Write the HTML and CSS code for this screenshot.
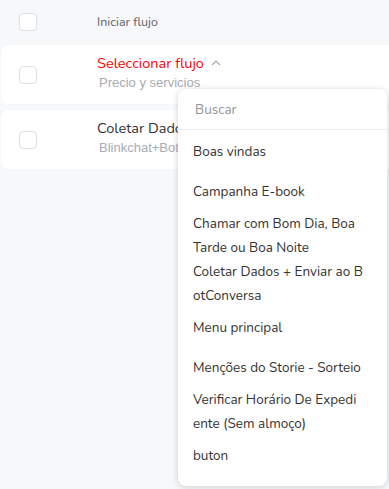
FILE: index.html
```html
<!DOCTYPE html>
<html>
<head>
<meta charset="utf-8">
<link rel="stylesheet" href="styles.css">
</head>
<body>
<div class="page">
  <div class="row top">
    <span class="checkbox"></span>
    <div class="info"><div class="title small">Iniciar flujo</div></div>
  </div>
  <div class="row card">
    <span class="checkbox"></span>
    <div class="info">
      <div class="title red">Seleccionar flujo <svg class="chev" width="10" height="6" viewBox="0 0 10 6"><path d="M1 5 L5 1.2 L9 5" fill="none" stroke="#a8abb2" stroke-width="1.3"/></svg></div>
      <div class="sub">Precio y servicios</div>
    </div>
  </div>
  <div class="row card">
    <span class="checkbox"></span>
    <div class="info clip">
      <div class="title">Coletar Dados + Enviar ao BotConversa</div>
      <div class="sub">Blinkchat+BotConversa</div>
    </div>
  </div>

  <div class="dropdown">
    <div class="search">Buscar</div>
    <ul class="list">
      <li class="item">Boas vindas</li>
      <li class="item gap-lg">Campanha E-book</li>
      <li class="item">Chamar com Bom Dia, Boa<br>Tarde ou Boa Noite</li>
      <li class="item tight">Coletar Dados + Enviar ao B<br>otConversa</li>
      <li class="item">Menu principal</li>
      <li class="item gap-lg">Menções do Storie - Sorteio</li>
      <li class="item">Verificar Horário De Expedi<br>ente (Sem almoço)</li>
      <li class="item">buton</li>
    </ul>
  </div>
</div>
</body>
</html>
```
FILE: styles.css
```css
html, body {
  margin: 0;
  padding: 0;
  background: #f7f8fa;
  font-family: "Nunito", "Lato", "Noto Sans", sans-serif;
  overflow: hidden;
}
.page {
  position: relative;
  width: 389px;
  height: 489px;
  overflow: hidden;
}
.row {
  display: flex;
  align-items: center;
  padding-left: 19px;
}
.top {
  height: 43px;
  margin-bottom: 2px;
}
.card {
  background: #fff;
  border-radius: 8px;
  margin-left: 1px;
  width: 400px;
  height: 59px;
  padding-left: 18px;
  margin-bottom: 6px;
  align-items: flex-start;
}
.card .checkbox {
  margin-top: 21px;
}
.card .info {
  padding-top: 8px;
}
.checkbox {
  box-sizing: border-box;
  width: 18px;
  height: 18px;
  border: 1px solid #dcdfe6;
  border-radius: 4px;
  background: #fff;
  flex: none;
}
.info {
  margin-left: 60px;
  white-space: nowrap;
}
.info.clip {
  width: 81px;
  overflow: hidden;
}
.title {
  font-size: 14.5px;
  line-height: 20px;
  color: #303133;
}
.title.small {
  font-size: 12.5px;
  color: #606266;
}
.title.red {
  color: #ff0000;
}
.chev {
  margin-left: 3px;
  vertical-align: 2px;
}
.sub {
  font-family: "Liberation Sans", Arial, sans-serif;
  font-size: 13px;
  line-height: 20px;
  color: #a8abb2;
  padding-left: 2px;
}
.dropdown {
  position: absolute;
  left: 178px;
  top: 89px;
  width: 209px;
  height: 397px;
  background: #fff;
  border-radius: 8px;
  box-shadow: 0 1px 6px rgba(0, 0, 0, 0.18);
}
.search {
  box-sizing: border-box;
  height: 41px;
  line-height: 41px;
  padding-top: 2px;
  padding-left: 17px;
  font-size: 13.5px;
  line-height: 38px;
  color: #909399;
  border-bottom: 1px solid #ebeef5;
}
.list {
  list-style: none;
  margin: 0;
  padding: 10px 0 0 15px;
}
.item {
  font-size: 13.5px;
  line-height: 24px;
  color: #333;
  margin-top: 8px;
}
.item:first-child {
  margin-top: 0;
}
.item.gap-lg {
  margin-top: 16px;
}
.item.tight {
  margin-top: 0;
}
```
